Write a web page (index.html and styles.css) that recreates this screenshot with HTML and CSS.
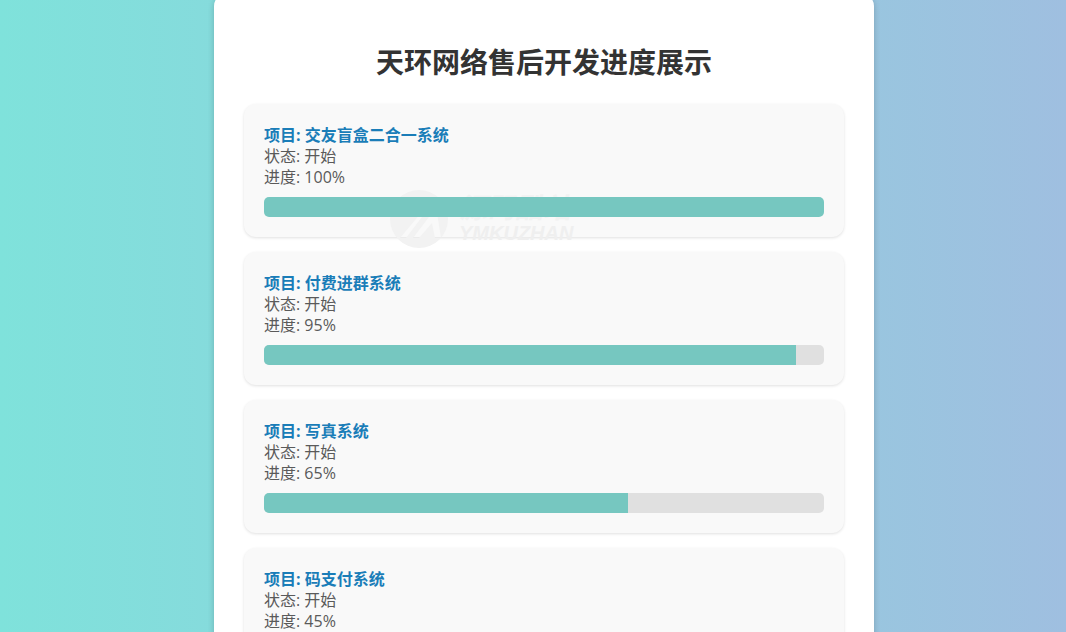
FILE: index.html
```html
<!DOCTYPE html>
<html lang="zh-CN">

<head>
    <meta charset="UTF-8">
    <meta name="viewport" content="width=device-width, initial-scale=1.0">
    <title>天环网络售后开发进度展示</title>
    <link rel="stylesheet" href="styles.css">
</head>

<body>
    <div class="container">
        <h1>天环网络售后开发进度展示</h1>

        <div class="project">
            <div class="project-title">项目: 交友盲盒二合一系统</div>
            <div class="project-info">状态: 开始</div>
            <div class="project-info">进度: 100%</div>
            <div class="progress-bar">
                <div class="progress" style="width: 100%"></div>
            </div>
            <!-- 水印 -->
            <div class="watermark">
                <svg class="watermark-logo" viewBox="0 0 60 60" aria-hidden="true">
                    <path fill-rule="evenodd" d="M30 1a29 29 0 1 0 0 58a29 29 0 1 0 0-58zM11 49L32 24h4L17 49zM24 49L43 24h5l4 25h-6l-3-15L30 49z" />
                </svg>
                <div class="watermark-text">
                    <span class="watermark-name">源码酷站</span>
                    <span class="watermark-site">YMKUZHAN</span>
                </div>
            </div>
        </div>

        <div class="project">
            <div class="project-title">项目: 付费进群系统</div>
            <div class="project-info">状态: 开始</div>
            <div class="project-info">进度: 95%</div>
            <div class="progress-bar">
                <div class="progress" style="width: 95%"></div>
            </div>
        </div>

        <div class="project">
            <div class="project-title">项目: 写真系统</div>
            <div class="project-info">状态: 开始</div>
            <div class="project-info">进度: 65%</div>
            <div class="progress-bar">
                <div class="progress" style="width: 65%"></div>
            </div>
        </div>

        <div class="project">
            <div class="project-title">项目: 码支付系统</div>
            <div class="project-info">状态: 开始</div>
            <div class="project-info">进度: 45%</div>
            <div class="progress-bar">
                <div class="progress" style="width: 45%"></div>
            </div>
        </div>
    </div>
</body>

</html>
```

FILE: styles.css
```css
* {
    box-sizing: border-box;
}

body {
    font-family: 'Open Sans', 'Noto Sans CJK SC', sans-serif;
    font-size: 16px;
    line-height: 21px;
    margin: 0;
    padding-left: 22px;
    background: linear-gradient(to right, #7fe2db, #9fbfe0);
    color: #5a5a5a;
    overflow-x: hidden;
}

.container {
    max-width: 660px;
    margin: -6px auto 20px;
    padding: 30px;
    background: #fff;
    border-radius: 12px;
    box-shadow: 0 2px 6px rgba(0, 0, 0, 0.2);
}

h1 {
    margin: 18px 0 22px;
    font-size: 28px;
    line-height: 40px;
    text-align: center;
    color: #333;
}

.project {
    position: relative;
    margin-bottom: 15px;
    padding: 21px 20px 20px;
    background: #f9f9f9;
    border-radius: 12px;
    box-shadow: 0 1px 3px rgba(0, 0, 0, 0.12);
}

.project-title {
    font-weight: bold;
    color: #1a7db8;
}

.progress-bar {
    position: relative;
    z-index: 1;
    height: 20px;
    margin-top: 9px;
    background: #e0e0e0;
    border-radius: 5px;
    overflow: hidden;
}

.progress {
    height: 100%;
    background: #76c7c0;
}

/* 水印 */
.watermark {
    position: absolute;
    left: 145px;
    top: 85px;
    z-index: 0;
    display: flex;
    align-items: flex-start;
    gap: 10px;
    color: #f2f2f2;
    pointer-events: none;
}

.watermark-logo {
    width: 60px;
    height: 60px;
    fill: currentColor;
}

.watermark-text {
    display: flex;
    flex-direction: column;
    gap: 4px;
    padding-top: 11px;
    font-family: 'Liberation Sans', 'Noto Sans CJK SC', sans-serif;
    font-style: italic;
    font-weight: bold;
}

.watermark-name {
    font-size: 28px;
    line-height: 18px;
}

.watermark-site {
    font-size: 20px;
    line-height: 22px;
    color: #efefef;
}
```
